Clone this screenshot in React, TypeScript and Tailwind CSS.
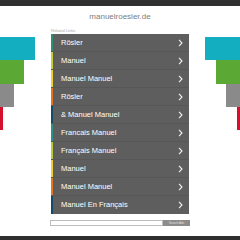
const links = [
  { label: "Rösler", stripe: "bg-[#2f8f74]" },
  { label: "Manuel", stripe: "bg-[#c5d034]" },
  { label: "Manuel Manuel", stripe: "bg-[#f2d02a]" },
  { label: "Rösler", stripe: "bg-[#e8731f]" },
  { label: "& Manuel Manuel", stripe: "bg-[#134c6b]" },
  { label: "Francais Manuel", stripe: "bg-[#2f8f84]" },
  { label: "Français Manuel", stripe: "bg-[#b9cd3a]" },
  { label: "Manuel", stripe: "bg-[#f2cf2a]" },
  { label: "Manuel Manuel", stripe: "bg-[#e8761f]" },
  { label: "Manuel En Français", stripe: "bg-[#164a6b]" },
];

const Chevron = () => (
  <svg width="5" height="8" viewBox="0 0 5 8" className="shrink-0">
    <polyline points="1,0.8 4,4 1,7.2" fill="none" stroke="#f2f2f2" strokeWidth="1.1" />
  </svg>
);

export default function App() {
  return (
    <div className="w-[240px] h-[240px] overflow-hidden bg-white flex flex-col font-['Liberation_Sans',Arial,sans-serif]">
      {/* top bar */}
      <div className="h-[6px] bg-[#303030] shrink-0" />

      <div className="grid grid-cols-[51px_138px_51px]">
        {/* left decoration */}
        <div className="flex flex-col items-start pt-[31px]">
          <div className="w-[35px] h-[23px] bg-[#13aebf]" />
          <div className="w-[24px] h-[24px] bg-[#5ba834]" />
          <div className="w-[14px] h-[23px] bg-[#8a8a8a]" />
          <div className="w-[3px] h-[23px] bg-[#d5102c]" />
        </div>

        {/* center */}
        <div className="flex flex-col">
          <div className="h-[22px] flex items-center justify-center text-[8px] text-[#7d7d7d] leading-none">
            manuelroesler.de
          </div>
          <div className="h-[6px] flex items-start text-[4px] leading-none text-[#a8a8a8] pt-px">
            Related Links
          </div>
          <div className="bg-[#5e5e5e] flex flex-col">
            {links.map((item, i) => (
              <div
                key={i}
                className="h-[18px] flex items-stretch border-b border-[#575757] last:border-b-0"
              >
                <div className={`w-[2px] ${item.stripe}`} />
                <div className="flex-1 flex items-center justify-between pl-[8px] pr-[6px]">
                  <span className="text-[7.5px] text-white leading-none">{item.label}</span>
                  <Chevron />
                </div>
              </div>
            ))}
          </div>
          <div className="flex mt-[6px] -mx-px h-[6px]">
            <div className="flex-1 border border-[#bdbdbd] bg-white" />
            <div className="w-[27px] bg-[#8c8c8c] text-[3px] text-[#e0e0e0] flex items-center justify-center leading-none">
              Search Ads
            </div>
          </div>
        </div>

        {/* right decoration */}
        <div className="flex flex-col items-end pt-[31px]">
          <div className="w-[35px] h-[23px] bg-[#13aebf]" />
          <div className="w-[24px] h-[24px] bg-[#5ba834]" />
          <div className="w-[14px] h-[23px] bg-[#8a8a8a]" />
          <div className="w-[3px] h-[23px] bg-[#d5102c]" />
        </div>
      </div>

      {/* bottom bar */}
      <div className="mt-auto h-[4px] bg-[#2e2e2e] shrink-0" />
    </div>
  );
}
